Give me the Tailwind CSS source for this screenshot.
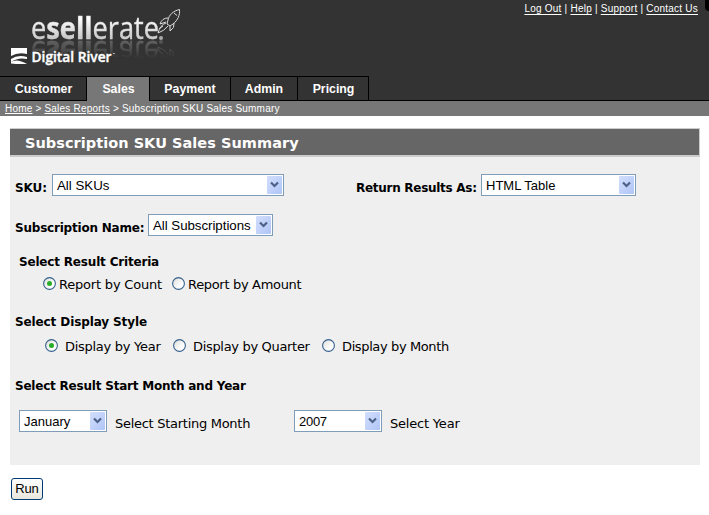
<!DOCTYPE html>
<html lang="en">
<head>
<meta charset="utf-8">
<title>Subscription SKU Sales Summary</title>
<script src="https://cdn.jsdelivr.net/npm/@tailwindcss/browser@4"></script>
</head>
<body class="w-[709px] h-[515px] overflow-hidden bg-white text-black font-['DejaVu_Sans',sans-serif] text-[13px] leading-4 tracking-[-0.28px]">
<svg class="absolute w-0 h-0">
  <defs>
    <linearGradient id="btn" x1="0" y1="0" x2="1" y2="1"><stop offset="0" stop-color="#d3defc"/><stop offset="1" stop-color="#afc5f7"/></linearGradient>
    <linearGradient id="rad" x1="0" y1="0" x2="1" y2="1"><stop offset="0" stop-color="#dcdcd8"/><stop offset=".7" stop-color="#fff"/></linearGradient>
  </defs>
  <symbol id="arrow" viewBox="0 0 15 18"><rect width="15" height="18" rx="1" fill="url(#btn)"/><path d="M4 6.500 7.500 10 11 6.500" fill="none" stroke="#4d6185" stroke-width="2.200"/></symbol>
  <symbol id="off" viewBox="0 0 13 13"><circle cx="6.500" cy="6.500" r="5.900" fill="url(#rad)" stroke="#33608c" stroke-width="1.100"/></symbol>
  <symbol id="on" viewBox="0 0 13 13"><circle cx="6.500" cy="6.500" r="5.900" fill="url(#rad)" stroke="#33608c" stroke-width="1.100"/><circle cx="6.500" cy="6.500" r="2.500" fill="#28ad28"/></symbol>
</svg>

<header class="h-[101px] bg-[#333] flex flex-col justify-between relative tracking-normal">
  <div class="flex justify-between h-[76px]">
    <div class="relative w-[200px] h-[76px]">
      <svg class="w-[200px] h-[40px] [-webkit-box-reflect:below_0px_linear-gradient(to_bottom,transparent_55%,rgba(255,255,255,0.32)_100%)]" viewBox="0 0 200 40" font-family="'Open Sans', sans-serif">
        <defs>
          <linearGradient id="logo" x1="0" y1="0" x2="0" y2="1"><stop offset=".3" stop-color="#fff"/><stop offset=".8" stop-color="#c4c4c4"/></linearGradient>
        </defs>
        <text x="31" y="39" font-size="31" textLength="128" lengthAdjust="spacingAndGlyphs" fill="url(#logo)" stroke="#ddd" stroke-width=".4">e<tspan font-weight="700">sell</tspan>erate</text>
        <circle cx="161" cy="38" r="2" fill="#aaa"/>
        <g fill="none" stroke="#ddd" stroke-width="1" stroke-linejoin="round">
          <path d="M179.500 9.500C173 11 169 15 168 20L167 24L170 26L173 24C178 20 180 15 179.500 9.500Z"/>
          <path d="M168 18Q162 18 160 24L166 22M174 23Q175 28 170 31L170 26M174 13 177 15.500"/>
          <path d="M166 23Q160 25 158 33Q164 31 168 26M159 29 163 26"/>
        </g>
      </svg>
      <svg class="absolute left-0 top-[40px] w-[200px] h-[36px]" viewBox="0 40 200 36" font-family="'Open Sans', sans-serif">
        <path d="M11 48H27V54Q18 52 11 56Z" fill="#fff"/>
        <path d="M11 59Q18 54 27 57V59Q18 57 11 62ZM11 63.500V62Q17 58 27 64H16Z" fill="#fff"/>
        <text x="31.500" y="61.500" font-size="14.500" font-weight="600" textLength="80" lengthAdjust="spacingAndGlyphs" fill="#fff" stroke="#fff" stroke-width=".4">Digital River</text>
        <path d="M113 53.500h2" stroke="#aaa"/>
      </svg>
    </div>
    <nav class="pt-[3px] pr-[11px] flex items-start gap-[3px] font-['Liberation_Sans',sans-serif] text-[10px] leading-3 tracking-[0.23px] text-white">
      <a class="underline underline-offset-2">Log Out</a><span>|</span><a class="underline underline-offset-2">Help</a><span>|</span><a class="underline underline-offset-2">Support</a><span>|</span><a class="underline underline-offset-2">Contact Us</a>
    </nav>
    <span class="absolute right-0 top-0 w-[4px] h-[11px] bg-black rounded-bl-full"></span>
  </div>
  <nav class="flex h-[25px] border-b border-black font-['Liberation_Sans',sans-serif] font-bold text-[12.300px] leading-[24px] text-white text-center">
    <a class="w-[87px] pl-px border-t border-r border-black">Customer</a>
    <a class="w-[62px] h-[25px] pl-px border-t border-black bg-[#777]">Sales</a>
    <a class="w-[82px] border-t border-x border-black">Payment</a>
    <a class="w-[67px] border-t border-r border-black">Admin</a>
    <a class="w-[71px] pl-px border-t border-r border-black">Pricing</a>
  </nav>
</header>

<div class="h-[15px] bg-[#777] pl-[5px] font-['Liberation_Sans',sans-serif] text-[10px] leading-[16px] text-white tracking-[0.2px] whitespace-nowrap"><a class="underline">Home</a> &gt; <a class="underline">Sales Reports</a> &gt; Subscription SKU Sales Summary</div>

<main class="mt-3 ml-[10px] w-[690px] h-[337px] bg-[#efefef] whitespace-nowrap">
  <h1 class="h-[29px] border-t border-b-2 border-r border-[#ccc] bg-[#666] pl-[15px] text-white font-bold text-[14.500px] leading-[28px] tracking-[0.040px]">Subscription SKU Sales Summary</h1>
  <div class="mt-[17px] flex h-[22px] pl-[5px]">
    <b class="w-[37px] pt-[6px] text-[12px] tracking-[-0.1px]">SKU:</b>
    <div class="w-[232px] border border-[#7f9db9] bg-white flex items-center justify-between pl-1 pr-px font-['Liberation_Sans',sans-serif] text-[13.300px] tracking-normal"><span class="pt-px">All SKUs</span><svg class="w-[15px] h-[18px]"><use href="#arrow"/></svg></div>
    <b class="ml-[72px] w-[125px] pt-[6px] text-[12px] tracking-[-0.28px]">Return Results As:</b>
    <div class="w-[155px] border border-[#7f9db9] bg-white flex items-center justify-between pl-1 pr-px font-['Liberation_Sans',sans-serif] text-[13px] tracking-normal"><span class="pt-px">HTML Table</span><svg class="w-[15px] h-[18px]"><use href="#arrow"/></svg></div>
  </div>
  <div class="mt-[18px] flex h-[22px] pl-[5px]">
    <b class="w-[133px] pt-[6px] text-[12px] tracking-[-0.21px]">Subscription Name:</b>
    <div class="w-[125px] border border-[#7f9db9] bg-white flex items-center justify-between pl-1 pr-px font-['Liberation_Sans',sans-serif] text-[13.300px] tracking-[-0.040px]"><span class="pt-px">All Subscriptions</span><svg class="w-[15px] h-[18px]"><use href="#arrow"/></svg></div>
  </div>
  <h2 class="mt-[18px] pl-[9px] font-bold text-[12px] tracking-[-0.18px]">Select Result Criteria</h2>
  <div class="mt-[7px] h-4 pl-[33px] flex items-center">
    <svg class="w-[13px] h-[13px] mr-[3px] -mt-[3px]"><use href="#on"/></svg><label class="w-[113px] tracking-[-0.2px]">Report by Count</label>
    <svg class="w-[13px] h-[13px] mr-[3px] -mt-[3px]"><use href="#off"/></svg><label class="tracking-[-0.32px]">Report by Amount</label>
  </div>
  <h2 class="mt-[21px] pl-[5px] font-bold text-[12px] tracking-[-0.11px]">Select Display Style</h2>
  <div class="mt-[9px] h-4 pl-[35px] flex items-center">
    <svg class="w-[13px] h-[13px] mr-[7px] -mt-[3px]"><use href="#on"/></svg><label class="w-[108px]">Display by Year</label>
    <svg class="w-[13px] h-[13px] mr-[7px] -mt-[3px]"><use href="#off"/></svg><label class="w-[129px] tracking-[-0.32px]">Display by Quarter</label>
    <svg class="w-[13px] h-[13px] mr-[7px] -mt-[3px]"><use href="#off"/></svg><label class="tracking-[-0.38px]">Display by Month</label>
  </div>
  <h2 class="mt-[23px] pl-[5px] font-bold text-[12px] tracking-[-0.21px]">Select Result Start Month and Year</h2>
  <div class="mt-[16px] flex h-[22px] pl-[9px]">
    <div class="w-[88px] border border-[#7f9db9] bg-white flex items-center justify-between pl-1 pr-px font-['Liberation_Sans',sans-serif] text-[13px] tracking-normal"><span class="pt-px">January</span><svg class="w-[15px] h-[18px]"><use href="#arrow"/></svg></div>
    <label class="ml-[8px] w-[179px] pt-[6px]">Select Starting Month</label>
    <div class="w-[88px] border border-[#7f9db9] bg-white flex items-center justify-between pl-1 pr-px font-['Liberation_Sans',sans-serif] text-[13px] tracking-[-0.280px]"><span class="pt-px">2007</span><svg class="w-[15px] h-[18px]"><use href="#arrow"/></svg></div>
    <label class="ml-[8px] pt-[6px] tracking-[-0.2px]">Select Year</label>
  </div>
</main>
<button class="block mt-[13px] ml-[11px] w-8 h-[22px] rounded-[3px] border border-[#003c74] bg-linear-to-b from-white to-[#e8e6dd] font-['Liberation_Sans',sans-serif] text-[13px] leading-5 tracking-[-0.15px]">Run</button>
</body>
</html>
